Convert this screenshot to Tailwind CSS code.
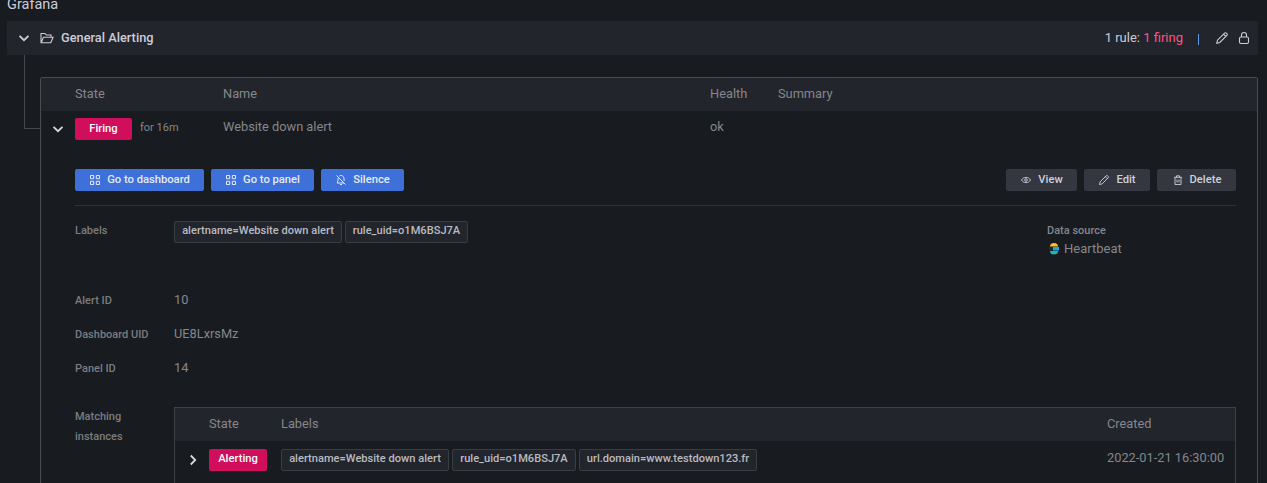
<!DOCTYPE html>
<html lang="en">
  <head>
    <meta charset="UTF-8" />
    <title>Alerting</title>
    <script src="https://cdn.jsdelivr.net/npm/@tailwindcss/browser@4"></script>
  </head>
  <body class="bg-[#181b1f] h-[483px] w-[1267px] overflow-hidden font-['Roboto',sans-serif] text-[12.8px] text-[#8e9096] pl-[7px] pr-[9px]">
    <!-- Page title, cut off by the top of the window -->
    <div class="h-[21px] text-[14.5px] leading-[9px] text-[#ccccdc]">Grafana</div>

    <!-- Group header -->
    <div class="h-[34px] bg-[#22252b] flex items-center pl-[9px] pr-[7px] text-[#ccccdc]">
      <svg class="w-[16px] h-[16px] mr-[8px]" viewBox="0 0 16 16" fill="none" stroke="#ccccdc" stroke-width="1.8"><path d="M3.5 5.8 8 10.2l4.5-4.4" /></svg>
      <svg class="w-[14px] h-[14px] mr-[7px]" viewBox="0 0 14 14" fill="none" stroke="#ccccdc" stroke-width="1.1"><path d="M1 11.5V2.5h4l1.3 1.5H11v2M1.2 11.8h9.6L13 6.2H3.4z" /></svg>
      <span class="font-medium text-[12.8px]">General Alerting</span>
      <span class="ml-auto text-[13px]">1 rule: <span class="text-[#ff5286]">1 firing</span></span>
      <span class="ml-[15px] w-px h-[11px] mt-[2px] bg-[#5b9ae0]"></span>
      <svg class="ml-[16px] w-[14px] h-[14px]" viewBox="0 0 14 14" fill="none" stroke="#ccccdc" stroke-width="1.1"><path d="M1.800 12.200l.7-3L9.600 2.100a1.200 1.200 0 0 1 1.700 0l.6.6a1.200 1.200 0 0 1 0 1.700L4.800 11.500zM8.500 3.200l2.300 2.300" /></svg>
      <svg class="ml-[8px] w-[14px] h-[14px]" viewBox="0 0 14 14" fill="none" stroke="#ccccdc" stroke-width="1.1"><rect x="2.5" y="6" width="9" height="6.5" rx="1.5" /><path d="M4.500 6V4a2.500 2.500 0 0 1 5 0v2" /></svg>
    </div>

    <!-- Tree line and rule table -->
    <div class="relative pl-[33px] pt-[22px]">
      <div class="absolute left-[17px] top-0 w-[16px] h-[74px] border-l border-b border-[#44474c]"></div>
      <div class="border border-[#4a4c52] rounded-t-[2px] h-[500px]">
        <div class="h-[33px] pb-[2px] bg-[#22252b] grid grid-cols-[34px_148px_487px_68px_1fr] items-center text-[#85878c]">
          <span></span><span>State</span><span>Name</span><span>Health</span><span>Summary</span>
        </div>
        <div class="grid grid-cols-[34px_148px_487px_68px_1fr] pt-[7px] h-[58px]">
          <svg class="w-[16px] h-[16px] mt-[3px] ml-[9px]" viewBox="0 0 16 16" fill="none" stroke="#d8d9de" stroke-width="1.8"><path d="M3.5 5.8 8 10.2l4.5-4.4" /></svg>
          <div class="flex items-start">
            <span class="w-[57px] h-[22px] bg-[#d10e5c] rounded-[2px] text-white text-[11.2px] font-medium flex items-center justify-center">Firing</span>
            <span class="ml-[8px] mt-[2px] text-[11px] text-[#85878c]">for 16m</span>
          </div>
          <span class="leading-[18px] text-[#85878c]">Website down alert</span>
          <span class="leading-[18px] text-[#85878c]">ok</span>
        </div>

        <!-- Actions -->
        <div class="mx-[34px] mr-[21px]">
          <div class="flex pb-[14px] border-b border-[#303236] text-[11.2px] font-medium">
            <div class="flex gap-[7px] text-[#e6e9f5]">
              <button class="h-[22px] w-[129px] rounded-[2px] bg-[#3d71d9] flex items-center justify-center gap-[6px]">
                <svg class="w-[12px] h-[12px]" viewBox="0 0 12 12" fill="none" stroke="#e6e9f5"><path d="M1.500 1.500h3.200v3.200H1.500zM7.300 1.500h3.200v3.200H7.300zM1.500 7.300h3.200v3.200H1.500zM7.300 7.300h3.200v3.200H7.300z" /></svg>Go to dashboard
              </button>
              <button class="h-[22px] w-[103px] rounded-[2px] bg-[#3d71d9] flex items-center justify-center gap-[6px]">
                <svg class="w-[12px] h-[12px]" viewBox="0 0 12 12" fill="none" stroke="#e6e9f5"><path d="M1.500 1.500h3.200v3.200H1.500zM7.300 1.500h3.200v3.200H7.300zM1.500 7.300h3.200v3.200H1.500zM7.300 7.300h3.200v3.200H7.300z" /></svg>Go to panel
              </button>
              <button class="h-[22px] w-[83px] rounded-[2px] bg-[#3d71d9] flex items-center justify-center gap-[6px]">
                <svg class="w-[12px] h-[12px]" viewBox="0 0 12 12" fill="none" stroke="#e6e9f5"><path d="M1.500 1.500l9 9M3.400 3.600C3 4.200 3 5 3 6c0 1.700-.8 2.500-1 3h7M4.300 2c1.800-1.200 4.700-.4 4.700 3 0 .8.1 1.500.3 2M5 10.500h2" /></svg>Silence
              </button>
            </div>
            <div class="ml-auto flex gap-[7px] text-[#ccd0dc]">
              <button class="h-[22px] w-[71px] rounded-[2px] bg-[#34373f] flex items-center justify-center gap-[6px]">
                <svg class="w-[12px] h-[12px]" viewBox="0 0 12 12" fill="none" stroke="#ccd0dc" stroke-width=".9"><path d="M1.500 6c1-1.700 2.600-2.600 4.500-2.600s3.500.9 4.500 2.600c-1 1.700-2.600 2.600-4.500 2.600S2.500 7.700 1.500 6z" /><circle cx="6" cy="6" r="1.300" /></svg>View
              </button>
              <button class="h-[22px] w-[66px] rounded-[2px] bg-[#34373f] flex items-center justify-center gap-[6px]">
                <svg class="w-[12px] h-[12px]" viewBox="0 0 12 12" fill="none" stroke="#ccd0dc" stroke-width=".9"><path d="M1.500 10.500l.6-2.600 6.100-6.100a1 1 0 0 1 1.400 0l.6.600a1 1 0 0 1 0 1.400L4.100 9.900zM7.300 2.700l2 2" /></svg>Edit
              </button>
              <button class="h-[22px] w-[79px] rounded-[2px] bg-[#34373f] flex items-center justify-center gap-[6px]">
                <svg class="w-[12px] h-[12px]" viewBox="0 0 12 12" fill="none" stroke="#ccd0dc" stroke-width=".9"><path d="M2 3.300h8M4.500 3.300V1.800h3v1.500M3 3.300v7.200h6V3.300M5 5.500v3M7 5.500v3" /></svg>Delete
              </button>
            </div>
          </div>

          <!-- Details -->
          <div class="flex pt-[15px]">
            <div class="flex-1">
              <div class="flex h-[22px] items-start">
                <span class="w-[99px] text-[11px] leading-[20px] font-medium text-[#7b7d82]">Labels</span>
                <div class="flex gap-[3px] text-[#b9bbc2] text-[11.1px] font-medium">
                  <span class="h-[22px] w-[168px] pb-px flex items-center justify-center bg-[#22252b] border border-[#3a3d44] rounded-[2px]">alertname=Website down alert</span>
                  <span class="h-[22px] w-[123px] pb-px flex items-center justify-center bg-[#22252b] border border-[#3a3d44] rounded-[2px]">rule_uid=o1M6BSJ7A</span>
                </div>
              </div>
              <div class="flex h-[34px] items-center mt-[41px]">
                <span class="w-[99px] text-[11px] font-medium text-[#7b7d82]">Alert ID</span><span class="mb-[2px] text-[#85878c]">10</span>
              </div>
              <div class="flex h-[34px] items-center">
                <span class="w-[99px] text-[11px] font-medium text-[#7b7d82]">Dashboard UID</span><span class="mb-[2px] text-[#85878c]">UE8LxrsMz</span>
              </div>
              <div class="flex h-[34px] items-center">
                <span class="w-[99px] text-[11px] font-medium text-[#7b7d82]">Panel ID</span><span class="mb-[2px] text-[#85878c]">14</span>
              </div>
            </div>
            <div class="w-[189px] pt-[2px]">
              <div class="text-[11px] font-medium text-[#85878c] leading-[16px]">Data source</div>
              <div class="flex items-center text-[13px] text-[#85878c]">
                <svg class="ml-[2px] mr-[5px] w-[10px] h-[12px]" viewBox="0 0 10 12"><path d="M1 3.500A4 3.500 0 0 1 9 3.500z" fill="#f6c324" /><rect x="0" y="4" width="4" height="3.500" fill="#1d2a3a" /><rect x="4" y="4" width="6" height="3.500" fill="#1ba9e0" /><path d="M1 8h8A4 3.500 0 0 1 1 8z" fill="#1fb8a8" /></svg>Heartbeat
              </div>
            </div>
          </div>

          <!-- Matching instances -->
          <div class="flex mt-[21px]">
            <div class="w-[99px] text-[11px] font-medium leading-[20px] text-[#7b7d82]">Matching<br />instances</div>
            <div class="flex-1 border border-[#3e4045] h-[100px]">
              <div class="h-[33px] pb-[2px] bg-[#22252b] grid grid-cols-[34px_72px_826px_1fr] items-center text-[#85878c]">
                <span></span><span>State</span><span>Labels</span><span>Created</span>
              </div>
              <div class="grid grid-cols-[34px_72px_826px_1fr] pt-[8px]">
                <svg class="w-[16px] h-[16px] mt-[3px] ml-[10px]" viewBox="0 0 16 16" fill="none" stroke="#d8d9de" stroke-width="1.800"><path d="M5.800 3.500 10.200 8l-4.400 4.500" /></svg>
                <span class="w-[58px] h-[22px] pb-px bg-[#d10e5c] rounded-[2px] text-white text-[11.2px] font-medium flex items-center justify-center">Alerting</span>
                <div class="flex gap-[3px] text-[#b9bbc2] text-[11.1px] font-medium">
                  <span class="h-[22px] w-[168px] pb-px flex items-center justify-center bg-[#22252b] border border-[#3a3d44] rounded-[2px]">alertname=Website down alert</span>
                  <span class="h-[22px] w-[124px] pb-px flex items-center justify-center bg-[#22252b] border border-[#3a3d44] rounded-[2px]">rule_uid=o1M6BSJ7A</span>
                  <span class="h-[22px] w-[178px] pb-px flex items-center justify-center bg-[#22252b] border border-[#3a3d44] rounded-[2px]">url.domain=www.testdown123.fr</span>
                </div>
                <span class="leading-[18px] text-[#85878c] whitespace-nowrap">2022-01-21 16:30:00</span>
              </div>
            </div>
          </div>
        </div>
      </div>
    </div>
  </body>
</html>
